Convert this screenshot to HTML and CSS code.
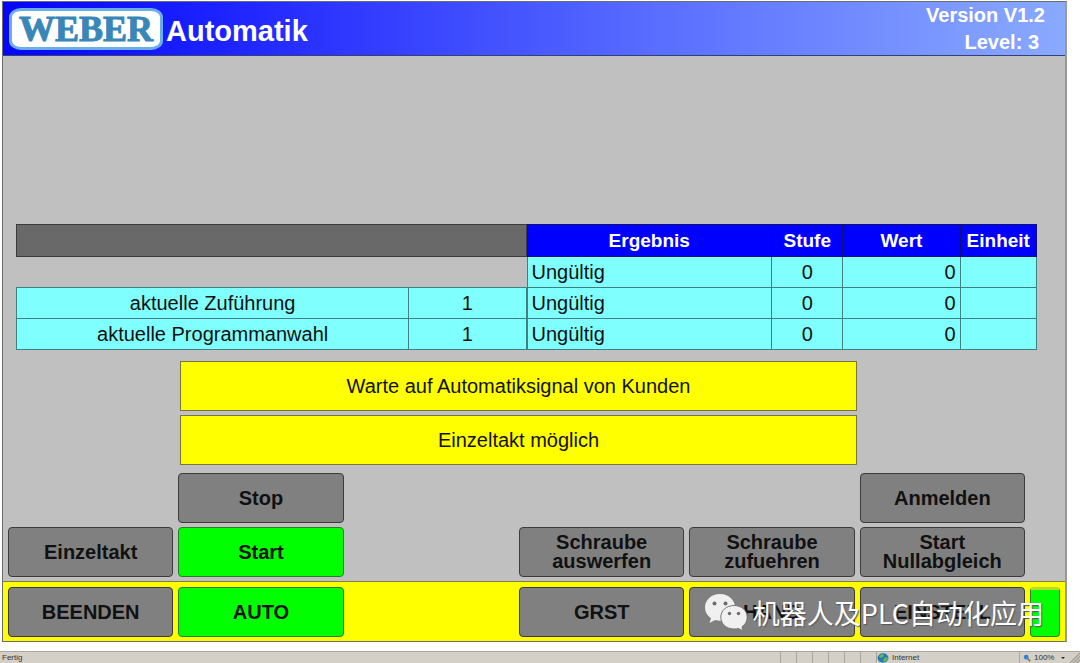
FILE: index.html
```html
<!DOCTYPE html>
<html lang="de">
<head>
<meta charset="utf-8">
<title>WEBER Automatik</title>
<link rel="stylesheet" href="styles.css">
</head>
<body>
<div class="panel">
  <header class="header">
    <div class="logo">WEBER</div>
    <h1 class="title">Automatik</h1>
    <div class="info">
      <div>Version V1.2</div>
      <div class="level">Level: 3</div>
    </div>
  </header>

  <main class="main">
    <div class="tables">
      <table class="grid selection">
        <colgroup><col class="c-name"><col class="c-num"></colgroup>
        <tbody>
          <tr class="head"><td colspan="2" class="blank-head"></td></tr>
          <tr><td colspan="2" class="blank"></td></tr>
          <tr><td>aktuelle Zuführung</td><td>1</td></tr>
          <tr><td>aktuelle Programmanwahl</td><td>1</td></tr>
        </tbody>
      </table>
      <table class="grid results">
        <colgroup><col class="c-result"><col class="c-step"><col class="c-value"><col class="c-unit"></colgroup>
        <thead>
          <tr class="head"><th>Ergebnis</th><th>Stufe</th><th>Wert</th><th>Einheit</th></tr>
        </thead>
        <tbody>
          <tr><td class="left">Ungültig</td><td>0</td><td class="right">0</td><td></td></tr>
          <tr><td class="left">Ungültig</td><td>0</td><td class="right">0</td><td></td></tr>
          <tr><td class="left">Ungültig</td><td>0</td><td class="right">0</td><td></td></tr>
        </tbody>
      </table>
    </div>

    <div class="messages">
      <p class="message">Warte auf Automatiksignal von Kunden</p>
      <p class="message">Einzeltakt möglich</p>
    </div>

    <div class="keys actions">
      <button class="key col2">Stop</button>
      <button class="key col6">Anmelden</button>
      <button class="key col1">Einzeltakt</button>
      <button class="key on col2">Start</button>
      <button class="key col4">Schraube<br>auswerfen</button>
      <button class="key col5">Schraube<br>zufuehren</button>
      <button class="key col6">Start<br>Nullabgleich</button>
    </div>
  </main>

  <nav class="keys modes">
    <button class="key col1">BEENDEN</button>
    <button class="key on col2">AUTO</button>
    <button class="key col4">GRST</button>
    <button class="key col5">HAND</button>
    <button class="key col6">EINSTELL</button>
    <button class="key on lamp" aria-label="Status"></button>
    <div class="watermark">
      <svg class="bubbles" viewBox="0 0 44 40" aria-hidden="true">
        <path class="bubble" d="M16 1C7.400 1 1 7 1 14.500c0 4.500 2.200 8.200 6 10.700L5.500 30l5.600-3c1.600.4 3.200.7 4.900.7C24.500 27.700 31 22 31 14.500S24.500 1 16 1z"/>
        <path class="bubble front" d="M30 12.500c-7.500 0-13.200 5-13.200 11.700S22.500 36 30 36c1.500 0 3-.2 4.300-.6l4.900 2.600-1.300-4.200c3.200-2.100 5.300-5.500 5.300-9.600 0-6.700-5.700-11.700-13.200-11.700z"/>
        <circle cx="10.500" cy="10.500" r="2"/><circle cx="21.500" cy="10.500" r="2"/>
        <circle cx="25.500" cy="20.500" r="1.700"/><circle cx="34.500" cy="20.500" r="1.700"/>
      </svg>
      <span lang="zh">机器人及PLC自动化应用</span>
    </div>
  </nav>
</div>

<footer class="status">
  <span class="ready">Fertig</span>
  <span class="cell"></span><span class="cell"></span><span class="cell"></span><span class="cell"></span><span class="cell"></span><span class="cell"></span>
  <span class="zone">
    <svg class="globe" viewBox="0 0 12 10" aria-hidden="true"><ellipse cx="6" cy="5" rx="5.500" ry="4.700" fill="#2678b8"/><path d="M2 3l3-2 2 1-1 2-3 1zM7 5l3-1 1 2-3 3-2-1z" fill="#5dbb55"/></svg>
    Internet
  </span>
  <span class="zoom">
    <svg class="lens" viewBox="0 0 10 10" aria-hidden="true"><path d="M5 5l4 4" stroke="#9a6a38" stroke-width="2"/><circle cx="4" cy="4" r="3" fill="#3185d8"/></svg>
    100%
    <span class="arrow"></span>
  </span>
  <svg class="grip" viewBox="0 0 10 10" aria-hidden="true"><path d="M1 10l9-9M4 10l6-6M7 10l3-3" stroke="#aaa69c" stroke-width="1.500"/></svg>
</footer>
</body>
</html>
```
FILE: styles.css
```css
* { box-sizing: border-box; }

body {
  margin: 0;
  min-height: 100vh;
  padding-top: 1px;
  display: flex;
  flex-direction: column;
  background: #fff;
  color: #111;
  font-family: "Liberation Sans", Arial, sans-serif;
  font-size: 20px;
}

.panel {
  margin: 0 13px 0 2px;
  border: 1px solid #6c6c6c;
  border-right: 2px solid #999;
  background: #c0c0c0;
}

.header {
  display: flex;
  align-items: center;
  height: 54px;
  padding: 0 20px 0 6px;
  border-bottom: 1px solid #344178;
  background: linear-gradient(90deg, #0505fa 0%, #1c22ff 20%, #5a6eff 62%, #8aaaff 100%);
  color: #fff;
  font-weight: bold;
}

.logo {
  width: 154px;
  height: 42px;
  border: 3px solid #69aee6;
  border-radius: 12px / 9px;
  background: #fff;
  color: #3986b8;
  font: bold 36px/36px "Liberation Serif", "Times New Roman", serif;
  text-align: center;
  -webkit-text-stroke: 1px #3986b8;
}

.title {
  margin: 4px 0 0 3px;
  font-size: 29px;
  line-height: 32px;
}

.info {
  margin-left: auto;
  line-height: 27px;
  text-align: right;
}

.level { padding-right: 6px; }

.main { padding: 168px 0 4px; }

.tables {
  display: grid;
  grid-template-columns: 1fr 1fr;
  margin: 0 28px 0 13px;
}

.grid {
  width: 100%;
  table-layout: fixed;
  border-collapse: collapse;
  align-self: start;
}

.grid tr { height: 31px; }
.grid .head { height: 32px; }

.grid td, .grid th {
  padding: 0 4px;
  border: 1px solid #3f8080;
  background: #80ffff;
  line-height: 24px;
  text-align: center;
}

.grid th {
  border-color: #101070;
  background: #0000fe;
  color: #fff;
  font-size: 19px;
}

.grid .blank-head { border-color: #3c3c3c; background: #696969; }
.grid .blank { border-left: 0; border-right: 0; background: #c0c0c0; }
.grid .left { text-align: left; }
.grid .right { text-align: right; }

.c-name { width: 77%; }
.c-num { width: 23%; }
.c-result { width: 48%; }
.c-step { width: 14%; }
.c-value { width: 23%; }
.c-unit { width: 15%; }

.messages {
  display: grid;
  gap: 4px;
  margin: 11px 208px 8px 177px;
}

.message {
  height: 50px;
  margin: 0;
  border: 1px solid #77773c;
  background: #ff0;
  line-height: 48px;
  text-align: center;
}

.keys {
  display: grid;
  grid-template-columns: repeat(6, 1fr) 30px;
  gap: 4px 5px;
  padding: 0 5px;
}

.modes {
  position: relative;
  padding: 5px 5px 4px;
  border-top: 1px solid #80803c;
  background: #ff0;
}

.key {
  height: 50px;
  padding: 0;
  border: 1px solid #3c3c3c;
  border-radius: 4px;
  background: #808080;
  color: #111;
  font: bold 20px/19px "Liberation Sans", Arial, sans-serif;
}

.on { border-color: #2f7a2f; background: #0f0; }
.lamp { border-top: 3px solid #b4dc28; }

.col1 { grid-column: 1; }
.col2 { grid-column: 2; }
.col4 { grid-column: 4; }
.col5 { grid-column: 5; }
.col6 { grid-column: 6; }

.watermark {
  position: absolute;
  right: 21px;
  bottom: 8px;
  display: flex;
  align-items: center;
  gap: 5px;
  color: #fff;
  font: 27px/40px "Noto Sans CJK SC", sans-serif;
  text-shadow: 1px 1px 1px #555;
  white-space: nowrap;
  pointer-events: none;
}

.bubbles { width: 44px; height: 40px; fill: #6c6c6c; }
.bubble { fill: #f0f0f0; }
.front { stroke: #777; stroke-width: 1; }

.status {
  display: flex;
  height: 12px;
  margin-top: auto;
  border-top: 1px solid #aaa69c;
  background: #d4d0c8;
  color: #333;
  font-size: 8px;
  line-height: 11px;
}

.ready { flex: 1; padding-left: 2px; }
.cell { width: 16px; border-left: 1px solid #aaa69c; }

.zone, .zoom {
  display: flex;
  align-items: center;
  gap: 3px;
  border-left: 1px solid #aaa69c;
}

.zone { width: 143px; }
.zoom { width: 50px; padding-left: 3px; }
.globe { width: 12px; height: 10px; }
.lens { width: 8px; height: 8px; }

.arrow {
  margin-left: 4px;
  border: 2px solid transparent;
  border-top-color: #222;
  border-bottom: 0;
}

.grip { width: 11px; height: 11px; }
```
